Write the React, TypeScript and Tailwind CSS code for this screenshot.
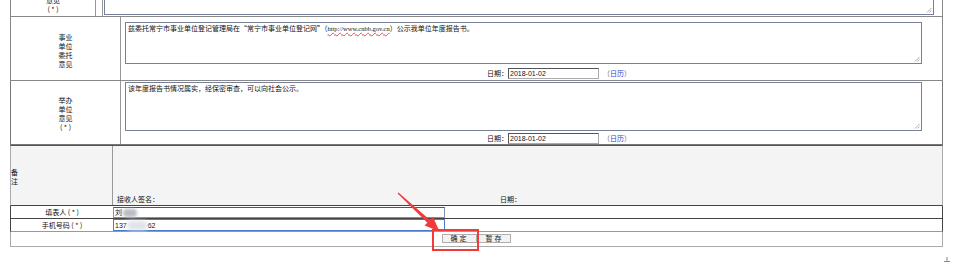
import React from "react";

// small diagonal grip drawn in the bottom-right corner of a textarea
const Grip: React.FC = () => (
  <svg width="6" height="6" viewBox="0 0 6 6" className="absolute right-[1px] bottom-[1px]">
    <line x1="1" y1="5.5" x2="5.5" y2="1" stroke="#999" strokeWidth="0.8" />
    <line x1="3.5" y1="5.5" x2="5.5" y2="3.5" stroke="#999" strokeWidth="0.8" />
  </svg>
);

const DateLine: React.FC = () => (
  <div className="flex items-center h-[12px] pl-[362px] leading-[11px]">
    <span>日期：</span>
    <div className="w-[91px] h-[11px] border border-[#aaa] border-t-[#555] border-l-[#555] bg-white px-[1px] font-['Liberation_Sans',sans-serif] text-[7px] leading-[9px]">
      2018-01-02
    </div>
    <span className="ml-[4px] text-[#666]">（</span>
    <span className="text-[#2f3fd0]">日历</span>
    <span className="text-[#666]">）</span>
  </div>
);

const App: React.FC = () => {
  return (
    <div className="relative w-[953px] h-[263px] overflow-hidden bg-white text-[7px] text-[#111] font-['Noto_Sans_CJK_SC','Noto_Sans',sans-serif]">
      <div className="ml-[10px] w-[933px] flex flex-col">
        {/* previous row, cut at the top */}
        <div className="flex h-[17px] border-x border-b border-[#888]">
          <div className="w-[85px] border-r border-[#999] flex flex-col items-center justify-end leading-[9px] pb-[2px] overflow-hidden">
            <span className="shrink-0">意见</span>
            <span className="shrink-0">( * )</span>
          </div>
          <div className="w-[7px] border-r border-[#999]" />
          <div className="flex-1 pl-[1px] pr-[8px]">
            <div className="relative h-[15px] border-l border-r border-b border-[#77809a]">
              <Grip />
            </div>
          </div>
        </div>

        {/* 事业单位委托意见 */}
        <div className="flex h-[64px] border-x border-b border-[#888]">
          <div className="w-[110px] border-r border-[#999] flex flex-col items-center justify-center leading-[9px] pt-[4px]">
            <span>事业</span>
            <span>单位</span>
            <span>委托</span>
            <span>意见</span>
          </div>
          <div className="flex-1 flex flex-col pl-[4px] pt-[5px]">
            <div className="relative w-[797px] h-[42px] border border-[#77809a] bg-white px-[2px] pt-[1px] leading-[9px]">
              兹委托常宁市事业单位登记管理局在“常宁市事业单位登记网”（
              <span className="font-['Liberation_Serif',serif] text-[6.5px] underline decoration-wavy decoration-[#e05050]">
                http://www.cnbb.gov.cn
              </span>
              ）公示我单位年度报告书。
              <Grip />
            </div>
            <div className="mt-[3px]">
              <DateLine />
            </div>
          </div>
        </div>

        {/* 举办单位意见 */}
        <div className="flex h-[64px] border-x border-b border-[#777]">
          <div className="w-[110px] border-r border-[#999] flex flex-col items-center justify-center leading-[9px] pt-[2px]">
            <span>举办</span>
            <span>单位</span>
            <span>意见</span>
            <span>( * )</span>
          </div>
          <div className="flex-1 flex flex-col pl-[4px] pt-[1px]">
            <div className="relative w-[797px] h-[50px] border border-[#77809a] bg-white px-[2px] pt-[1px] leading-[9px]">
              该年度报告书情况属实，经保密审查，可以向社会公示。
              <Grip />
            </div>
            <div className="mt-[1px]">
              <DateLine />
            </div>
          </div>
        </div>

        {/* 备注 */}
        <div className="flex h-[61px] border-x border-t border-b border-t-[#555] border-b-[#444] border-x-[#aaa] bg-[#f4f4f4]">
          <div className="w-[102px] border-r border-[#999] flex flex-col justify-center leading-[9px] pt-[2px]">
            <span>备</span>
            <span>注</span>
          </div>
          <div className="flex-1 flex items-end pb-[1px] leading-[9px]">
            <span className="ml-[4px] w-[383px]">接收人签名：</span>
            <span>日期：</span>
          </div>
        </div>

        {/* 填表人 */}
        <div className="flex h-[13px] border-x border-b border-[#444]">
          <div className="w-[102px] flex items-center justify-center leading-[9px]">填表人 ( * )</div>
          <div className="w-[332px] h-[11px] mt-[1px] border border-[#8a8fa8] border-t-[#555] bg-white px-[1px] flex items-center leading-[9px]">
            <span>刘</span>
            <span className="ml-[1px] w-[14px] h-[8px] rounded-sm bg-[#b9bcc4] blur-[1.5px]" />
          </div>
        </div>

        {/* 手机号码 */}
        <div className="flex h-[13px] border-x border-b border-[#444] border-b-[#999]">
          <div className="w-[102px] flex items-center justify-center leading-[9px]">手机号码 ( * )</div>
          <div className="w-[332px] h-[12px] border border-[#4a78d0] bg-white px-[1px] flex items-center font-['Liberation_Sans',sans-serif] text-[7px] leading-[9px]">
            <span>137</span>
            <span className="w-[21px] h-[9px] rounded-md bg-[#dfe2e8] blur-[2px]" />
            <span>62</span>
          </div>
        </div>

        {/* buttons */}
        <div className="flex h-[15px] border-x border-b border-[#aaa] pl-[431px] pt-[2px]">
          <button className="w-[35px] h-[9px] border border-[#b0b0b0] bg-[#f2f2f2] text-[7px] leading-[7px] tracking-[2px]">
            确定
          </button>
          <button className="ml-[1px] w-[33px] h-[9px] border border-[#b0b0b0] bg-[#f2f2f2] text-[7px] leading-[7px] tracking-[2px]">
            暂存
          </button>
        </div>
      </div>

      {/* red annotation: box round the confirm button and the arrow */}
      <div className="absolute left-[432px] top-[229px] w-[47px] h-[22px] border-2 border-[#f23a3a]" />
      <svg width="953" height="263" className="absolute left-0 top-0 pointer-events-none">
        <polygon points="397.6,193.4 398.4,192.6 430.2,220.3 427.6,223.1" fill="#f23a3a" />
        <polygon points="439.5,231.5 424.6,225.6 433.0,217.0" fill="#f23a3a" />
        <line x1="947" y1="257" x2="947" y2="262" stroke="#888" strokeWidth="1" />
        <line x1="944" y1="261.5" x2="950" y2="261.5" stroke="#888" strokeWidth="1" />
      </svg>
    </div>
  );
};

export default App;
